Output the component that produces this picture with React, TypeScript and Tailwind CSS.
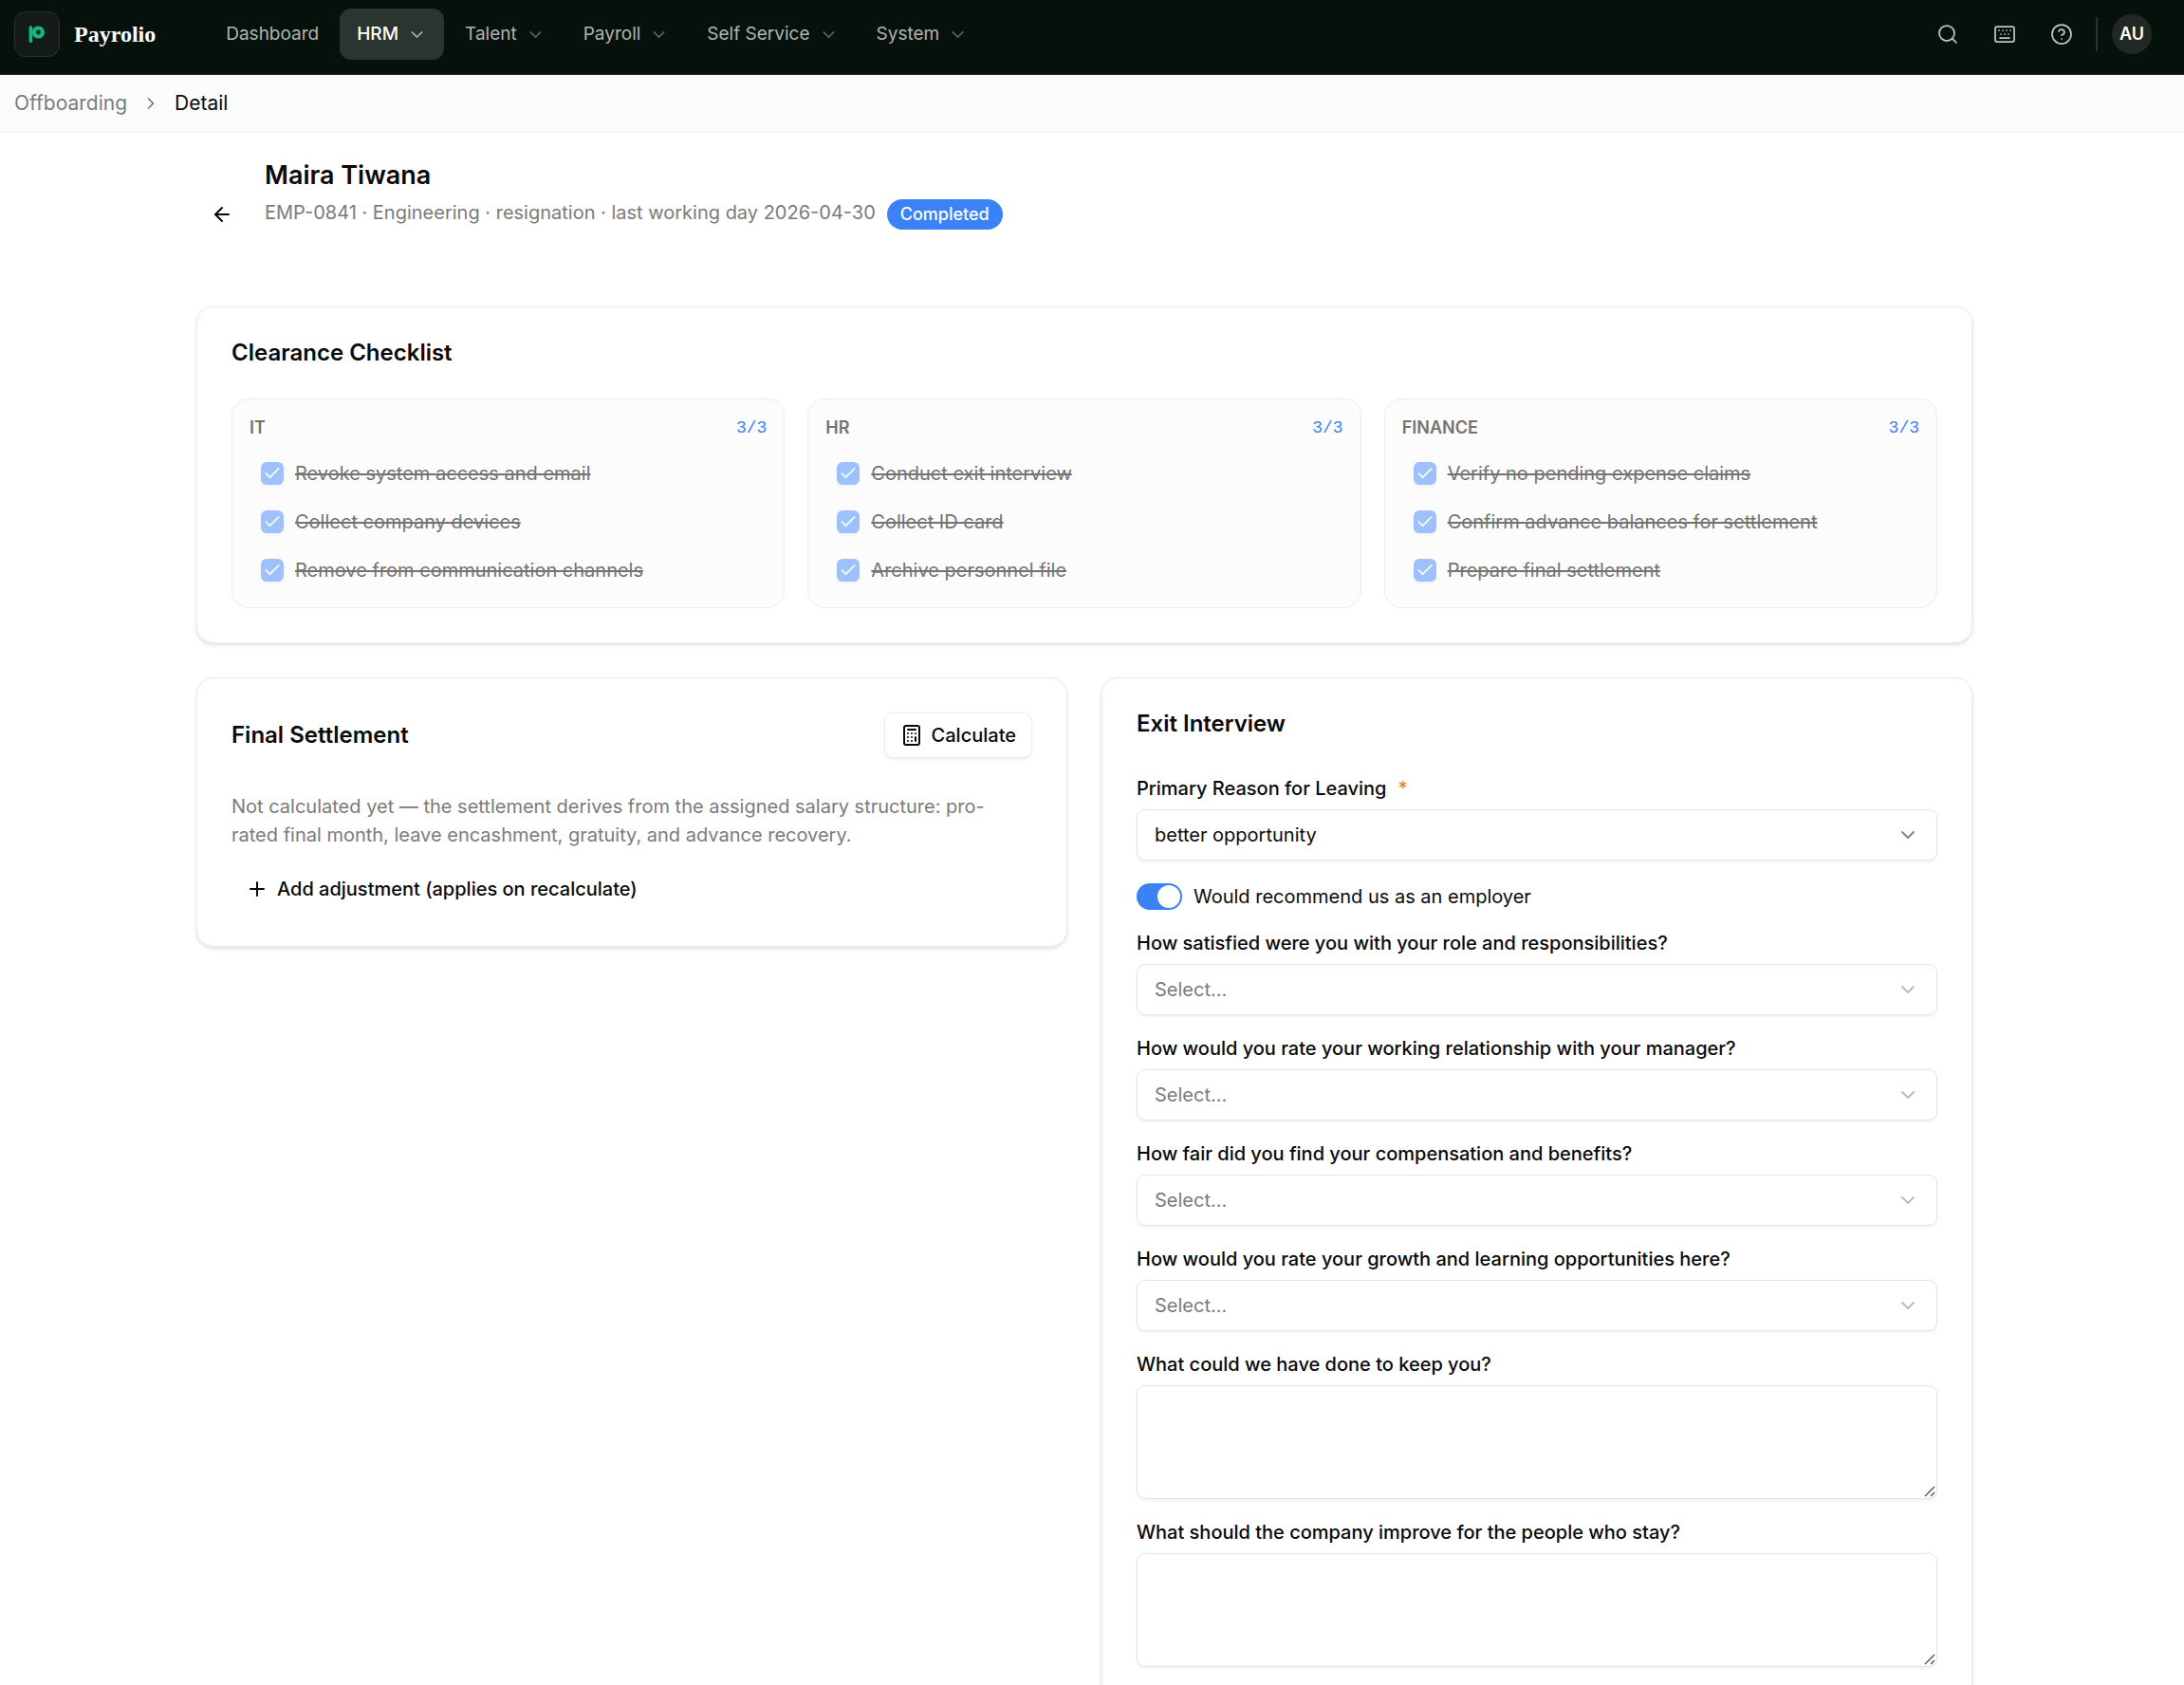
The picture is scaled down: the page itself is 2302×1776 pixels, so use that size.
import { useState } from 'react';
import {
  ArrowLeft,
  Calculator,
  Check,
  ChevronDown,
  ChevronRight,
  CircleHelp,
  Keyboard,
  Plus,
  Search,
} from 'lucide-react';

const navItems = [
  { label: 'Dashboard', menu: false },
  { label: 'HRM', menu: true },
  { label: 'Talent', menu: true },
  { label: 'Payroll', menu: true },
  { label: 'Self Service', menu: true },
  { label: 'System', menu: true },
];

const clearance = [
  {
    name: 'IT',
    items: [
      'Revoke system access and email',
      'Collect company devices',
      'Remove from communication channels',
    ],
  },
  {
    name: 'HR',
    items: [
      'Conduct exit interview',
      'Collect ID card',
      'Archive personnel file',
    ],
  },
  {
    name: 'FINANCE',
    items: [
      'Verify no pending expense claims',
      'Confirm advance balances for settlement',
      'Prepare final settlement',
    ],
  },
];

const ratingQuestions = [
  { id: 'role', label: 'How satisfied were you with your role and responsibilities?' },
  { id: 'manager', label: 'How would you rate your working relationship with your manager?' },
  { id: 'compensation', label: 'How fair did you find your compensation and benefits?' },
  { id: 'growth', label: 'How would you rate your growth and learning opportunities here?' },
];

const textQuestions = [
  { id: 'keep', label: 'What could we have done to keep you?' },
  { id: 'improve', label: 'What should the company improve for the people who stay?' },
];

const card =
  'rounded-[18px] border border-[#ebeceb] bg-white p-9 shadow-[0_2px_4px_rgba(0,0,0,0.12)]';

const Logo = () => (
  <span className="flex size-12 items-center justify-center rounded-xl border border-[#2b322e] bg-[#141b17]">
    <svg viewBox="0 0 18 20" className="h-5 w-[18px]" fill="none">
      <path d="M2.4 3v14.2" stroke="#10b981" strokeWidth="3.6" strokeLinecap="round" />
      <circle cx="10.4" cy="8" r="4.5" stroke="#10b981" strokeWidth="4.2" />
    </svg>
  </span>
);

const Navbar = () => (
  <header className="border-b border-[#1f2723] bg-[#07110c] pb-1.5 text-white">
    <div className="flex h-[72px] items-center pr-[34px] pl-[15px]">
      <a href="#" className="flex items-center gap-[15px]">
        <Logo />
        <span className="font-['Liberation_Serif',serif] text-2xl font-bold">Payrolio</span>
      </a>
      <nav className="ml-14 flex items-center gap-1">
        {navItems.map((item) => (
          <button
            key={item.label}
            type="button"
            className={
              item.label === 'HRM'
                ? 'flex h-[54px] items-center gap-[9px] rounded-xl bg-[#2b352f] px-[18px] text-[19px] font-medium text-white'
                : 'flex h-[54px] items-center gap-[9px] rounded-xl px-[18px] text-[19px] text-[#b0b3b1]'
            }
          >
            {item.label}
            {item.menu && (
              <ChevronDown
                size={21}
                strokeWidth={1.75}
                className={item.label === 'HRM' ? 'text-[#a9aeab]' : 'text-[#5e635f]'}
              />
            )}
          </button>
        ))}
      </nav>
      <div className="ml-auto flex items-center text-[#c1c4c2]">
        <button type="button" aria-label="Search" className="flex h-[54px] w-[60px] items-center justify-center">
          <Search size={24} strokeWidth={1.75} />
        </button>
        <button type="button" aria-label="Keyboard shortcuts" className="flex h-[54px] w-[60px] items-center justify-center">
          <Keyboard size={24} strokeWidth={1.75} />
        </button>
        <button type="button" aria-label="Help" className="flex h-[54px] w-[60px] items-center justify-center">
          <CircleHelp size={24} strokeWidth={1.75} />
        </button>
        <span className="ml-1.5 h-9 w-0.5 bg-[#2b322e]" />
        <button
          type="button"
          className="ml-[15px] size-[42px] rounded-full bg-[#212824] text-lg font-semibold text-white"
        >
          AU
        </button>
      </div>
    </div>
  </header>
);

const FieldLabel = ({ htmlFor, children }: any) => (
  <label htmlFor={htmlFor} className="block text-xl leading-[23px] font-medium">
    {children}
  </label>
);

const SelectField = ({ id, value, onChange, options }: any) => (
  <div className="relative">
    <select
      id={id}
      value={value}
      onChange={(e) => onChange(e.target.value)}
      className={
        value
          ? 'h-[54px] w-full appearance-none rounded-[9px] border border-[#e3e4e3] bg-white px-[18px] text-xl shadow-[0_2px_3px_rgba(0,0,0,0.05)]'
          : 'h-[54px] w-full appearance-none rounded-[9px] border border-[#e3e4e3] bg-white px-[18px] text-xl text-[#7b7b7b] shadow-[0_2px_3px_rgba(0,0,0,0.05)]'
      }
    >
      {options.map((option: string) => (
        <option key={option} value={option}>
          {option || 'Select...'}
        </option>
      ))}
    </select>
    <ChevronDown
      size={24}
      className={
        value
          ? 'pointer-events-none absolute top-[15px] right-[19px] text-[#858585]'
          : 'pointer-events-none absolute top-[15px] right-[19px] text-[#bcbcbc]'
      }
    />
  </div>
);

const TextField = ({ id }: any) => (
  <div className="relative">
    <textarea
      id={id}
      className="block h-[120px] w-full resize-none rounded-[9px] border border-[#e3e4e3] bg-white px-[18px] py-3 text-xl shadow-[0_2px_3px_rgba(0,0,0,0.05)]"
    />
    <svg
      viewBox="0 0 12 12"
      className="pointer-events-none absolute right-0.5 bottom-0.5 size-3"
      stroke="#555"
      strokeWidth="1.4"
    >
      <path d="M1 11 11 1M7 11l4-4" />
    </svg>
  </div>
);

const ClearanceChecklist = () => (
  <section className={card}>
    <h2 className="text-2xl leading-6 font-semibold">Clearance Checklist</h2>
    <div className="mt-9 grid grid-cols-3 gap-6">
      {clearance.map((group) => (
        <div
          key={group.name}
          className="rounded-[18px] border border-[#ebeceb] bg-[#fcfcfc] p-[18px]"
        >
          <div className="flex h-6 items-center justify-between">
            <h3 className="text-lg font-semibold text-[#737373]">{group.name}</h3>
            <span className="font-['Liberation_Mono',monospace] text-lg text-[#3b82f6]">
              3/3
            </span>
          </div>
          <ul className="mt-[15px] flex flex-col gap-[9px]">
            {group.items.map((item) => (
              <li key={item}>
                <label className="flex h-[42px] items-center gap-3 px-3 text-xl text-[#737373]">
                  <span className="relative size-6 shrink-0">
                    <input
                      type="checkbox"
                      checked
                      disabled
                      className="block size-6 appearance-none rounded-md bg-[#9dc1fb] shadow-[0_2px_3px_rgba(0,0,0,0.04)]"
                    />
                    <Check size={20} strokeWidth={2} className="absolute top-0.5 left-0.5 text-white" />
                  </span>
                  <span className="line-through decoration-2">{item}</span>
                </label>
              </li>
            ))}
          </ul>
        </div>
      ))}
    </div>
  </section>
);

const FinalSettlement = () => (
  <section className={card}>
    <div className="flex items-center justify-between">
      <h2 className="text-2xl leading-6 font-semibold">Final Settlement</h2>
      <button
        type="button"
        className="flex h-12 items-center gap-[9px] rounded-[9px] border border-[#ebeceb] bg-white px-4 text-xl font-medium shadow-[0_2px_3px_rgba(0,0,0,0.06)]"
      >
        <Calculator size={24} />
        Calculate
      </button>
    </div>
    <p className="mt-9 pr-6 text-xl leading-[30px] text-[#7b7b7b]">
      Not calculated yet — the settlement derives from the assigned salary structure: pro-rated
      final month, leave encashment, gratuity, and advance recovery.
    </p>
    <button
      type="button"
      className="mt-[18px] flex h-12 items-center gap-[9px] px-[15px] text-xl font-medium"
    >
      <Plus size={24} strokeWidth={2} />
      Add adjustment (applies on recalculate)
    </button>
  </section>
);

const ExitInterview = () => {
  const [reason, setReason] = useState('better opportunity');
  const [recommend, setRecommend] = useState(true);
  const [ratings, setRatings]: [any, any] = useState({});

  return (
    <section className={card}>
      <h2 className="text-2xl leading-6 font-semibold">Exit Interview</h2>
      <form className="mt-[45px] flex flex-col gap-6">
        <div className="flex flex-col gap-2.5">
          <FieldLabel htmlFor="reason">
            Primary Reason for Leaving
            <span className="ml-3 text-[#e08a2c]">*</span>
          </FieldLabel>
          <SelectField
            id="reason"
            value={reason}
            onChange={setReason}
            options={['better opportunity', 'compensation', 'relocation', 'personal']}
          />
        </div>
        <label className="flex h-7 items-center gap-3 text-xl">
          <input
            type="checkbox"
            role="switch"
            checked={recommend}
            onChange={(e) => setRecommend(e.target.checked)}
            className="flex h-7 w-12 appearance-none items-center rounded-full bg-gray-300 p-0.5 before:size-6 before:rounded-full before:bg-white checked:justify-end checked:bg-[#3b82f6]"
          />
          Would recommend us as an employer
        </label>
        {ratingQuestions.map((q) => (
          <div key={q.id} className="flex flex-col gap-2.5">
            <FieldLabel htmlFor={q.id}>{q.label}</FieldLabel>
            <SelectField
              id={q.id}
              value={ratings[q.id] || ''}
              onChange={(v: string) => setRatings({ ...ratings, [q.id]: v })}
              options={['', '1', '2', '3', '4', '5']}
            />
          </div>
        ))}
        {textQuestions.map((q) => (
          <div key={q.id} className="flex flex-col gap-2.5">
            <FieldLabel htmlFor={q.id}>{q.label}</FieldLabel>
            <TextField id={q.id} />
          </div>
        ))}
      </form>
    </section>
  );
};

const App = () => (
  <div className="flex h-screen flex-col bg-white font-['Inter','Liberation_Sans',sans-serif] text-[#0a0a0a]">
    <Navbar />
    <div className="flex h-[61px] shrink-0 items-center border-b border-[#eeefee] bg-[#fafcfb] px-[15px] text-[21px]">
      <a href="#" className="text-[#7b7b7b]">
        Offboarding
      </a>
      <ChevronRight size={20} strokeWidth={2} className="mx-[15px] text-[#737373]" />
      <span>Detail</span>
    </div>
    <main className="min-h-0 flex-1 overflow-y-auto pr-4 [scrollbar-width:none]">
      <div className="mx-auto max-w-[1920px] px-6 pt-[25px] pb-9">
        <div className="flex items-end">
          <button
            type="button"
            aria-label="Back"
            className="flex size-[54px] items-center justify-center"
          >
            <ArrowLeft size={24} strokeWidth={2} />
          </button>
          <div className="ml-[18px] pb-3.5">
            <h1 className="text-[27px] leading-10 font-semibold">Maira Tiwana</h1>
            <p className="mt-1 text-xl leading-[30px] text-[#7b7b7b]">
              EMP-0841 · Engineering · resignation · last working day 2026-04-30
            </p>
          </div>
          <span className="mb-[11px] ml-3 rounded-full bg-[#3b82f6] px-3.5 text-lg leading-8 font-medium text-white">
            Completed
          </span>
        </div>
        <div className="mt-[70px] flex flex-col gap-9">
          <ClearanceChecklist />
          <div className="grid grid-cols-2 items-start gap-9">
            <FinalSettlement />
            <ExitInterview />
          </div>
        </div>
      </div>
    </main>
  </div>
);

export default App;
